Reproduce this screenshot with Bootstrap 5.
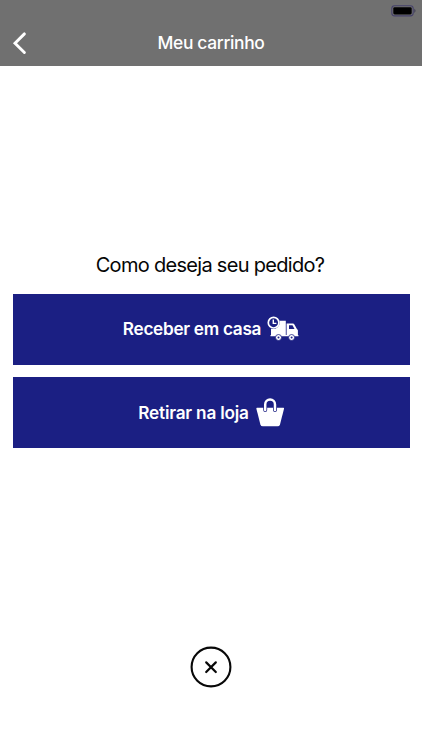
<!DOCTYPE html>
<html lang="pt-BR">
<head>
<meta charset="utf-8">
<meta name="viewport" content="width=device-width, initial-scale=1">
<title>Meu carrinho</title>
<link href="https://cdn.jsdelivr.net/npm/bootstrap@5.3.0/dist/css/bootstrap.min.css" rel="stylesheet">
<style>
body{font-family:Inter,"Liberation Sans",sans-serif;color:#050505}
svg{display:block;flex:none}
.topbar{height:65.6px;background:#707070;color:#fff}
.status{height:21px;padding:5px 5px 0 0}
.titlebar{height:44px;padding-left:12px}
.titlebar h1{font-size:17.4px;line-height:24px;font-weight:500;letter-spacing:-.34px}
.back{width:16px;height:24px}
.options{padding:185.4px 12.5px 0}
.question{font-size:20px;line-height:28px;font-weight:400;letter-spacing:-.7px;margin-bottom:14.6px;padding-right:2px}
.choice{height:71px;background:#1b1f83;color:#fff;border:0;border-radius:0;font-size:17.2px;line-height:24px;font-weight:600;letter-spacing:-.29px;gap:6px}
.choice:hover{background:#1b1f83;color:#fff}
.pickup{letter-spacing:-.2px;gap:7px}
.choices{gap:12.5px}
.closing{padding-bottom:62px}
</style>
<script src="https://cdn.jsdelivr.net/npm/bootstrap@5.3.0/dist/js/bootstrap.bundle.min.js"></script>
</head>
<body class="bg-white">
<div class="vh-100 d-flex flex-column overflow-hidden">
  <header class="topbar flex-shrink-0">
    <div class="status d-flex justify-content-end">
      <svg width="26" height="12" viewBox="0 0 26 12"><rect x=".8" y=".7" width="21.4" height="10.2" rx="2.8" fill="none" stroke="#45416a" stroke-width="1.1"/><rect x="2.3" y="2.2" width="18.4" height="7.3" rx="1.4" fill="#000"/><path d="M23.4 3.8q2.2 2 0 4.1z" fill="#393750"/></svg>
    </div>
    <div class="titlebar d-flex align-items-center">
      <button class="back btn p-0 border-0" aria-label="Voltar"><svg width="16" height="24" viewBox="0 0 16 24"><path d="M12.4 2.9 3 12.2l9.4 9.3" fill="none" stroke="#fff" stroke-width="2.9" stroke-linecap="round" stroke-linejoin="miter"/></svg></button>
      <h1 class="flex-fill text-center mb-0 pe-4 me-1">Meu carrinho</h1>
    </div>
  </header>
  <main class="options text-center">
    <h2 class="question">Como deseja seu pedido?</h2>
    <div class="choices d-flex flex-column">
      <button class="choice btn d-flex align-items-center justify-content-center p-0"><span>Receber em casa</span>
        <svg width="32" height="26" viewBox="0 0 32 26"><path d="M12.5 4.7H18.8v15.1H4v-7.1a6.7 6.7 0 0 0 8.5-8z" fill="#fff"/><path d="M19.6 7.6h6.3q1 0 1.5 1l2.5 4.3q1 .5 1 1.6V19h.5v1.3H3.5V19h16.1z" fill="#fff"/><path d="M22 9.3h3.5l2 3.7H22z" fill="#1b1f83"/><circle cx="6.6" cy="6.7" r="5.3" fill="#1b1f83" stroke="#fff" stroke-width="1.7"/><path d="M6.3 3.6v3.8h3.1" fill="none" stroke="#fff" stroke-width="1.4"/><g fill="#fff" stroke="#1b1f83" stroke-width=".8"><circle cx="11.5" cy="21.5" r="3"/><circle cx="24.6" cy="21.5" r="3"/></g><circle cx="11.5" cy="21.5" r="1" fill="#1b1f83"/><circle cx="24.6" cy="21.5" r="1" fill="#1b1f83"/></svg>
      </button>
      <button class="choice pickup btn d-flex align-items-center justify-content-center p-0"><span>Retirar na loja</span>
        <svg width="28" height="30" viewBox="0 0 28.6 30" preserveAspectRatio="none"><path d="M1 9.8h27q.8 0 .6.9l-4.1 15.7q-.5 1.9-2.5 1.9H7q-2 0-2.5-1.9L.4 10.7q-.2-.9.6-.9z" fill="#fff"/><path d="M9.4 12V6.4a5 5 0 0 1 10 0V12" fill="none" stroke="#1b1f83" stroke-width="4" stroke-linecap="round"/><path d="M9.4 12V6.4a5 5 0 0 1 10 0V12" fill="none" stroke="#fff" stroke-width="2.5" stroke-linecap="round"/></svg>
      </button>
    </div>
  </main>
  <footer class="closing mt-auto d-flex justify-content-center">
    <button class="btn p-0 border-0" aria-label="Fechar"><svg width="42" height="42" viewBox="0 0 42 42"><circle cx="21" cy="21" r="19.4" fill="none" stroke="#080808" stroke-width="2.1"/><path d="m16.2 16.4 9.6 9.6m0-9.6L16.2 26" fill="none" stroke="#080808" stroke-width="2.2" stroke-linecap="round"/></svg></button>
  </footer>
</div>
</body>
</html>
